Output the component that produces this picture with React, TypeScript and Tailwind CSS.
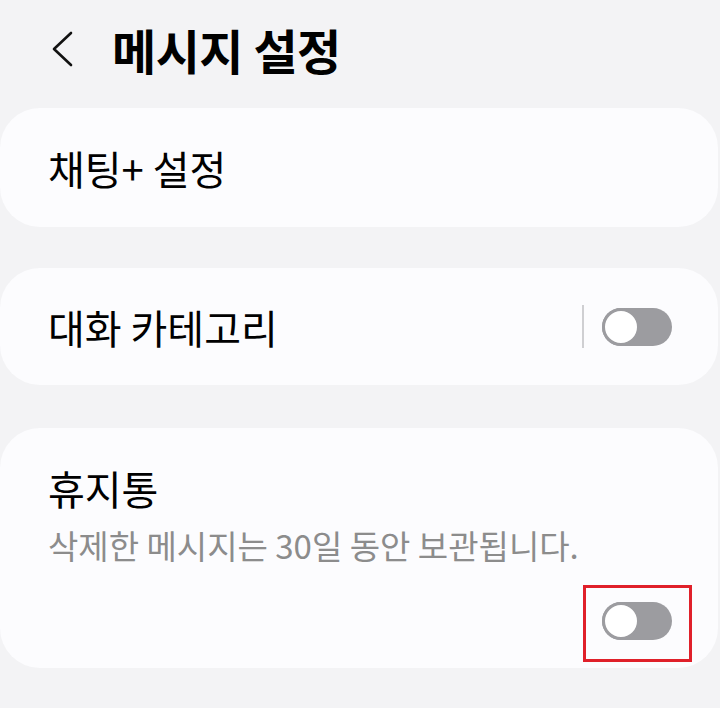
import React from 'react';

const font = { fontFamily: '"Noto Sans CJK KR", "Noto Sans", sans-serif' };

function Toggle() {
  return (
    <div className="relative h-[38px] w-[70px] rounded-full bg-[#9c9ca0]">
      <div className="absolute left-0 top-0 h-[38px] w-[38px] rounded-full border-[3px] border-[#9c9ca0] bg-white" />
    </div>
  );
}

export default function App() {
  return (
    <div className="h-[708px] w-[720px] overflow-hidden bg-[#f3f3f5] text-black" style={font}>
      <div className="flex h-[98px] items-center">
        <svg className="ml-[50px]" width="24" height="40" viewBox="0 0 24 40" fill="none">
          <path d="M21 4 L4 20 L21 36" stroke="#111" strokeWidth="2.6" strokeLinecap="round" strokeLinejoin="round" />
        </svg>
        <h1 className="ml-[38px] text-[48px] font-bold leading-none tracking-[-0.5px]">메시지 설정</h1>
      </div>

      <div className="flex flex-col gap-[41px] pt-[10px]">
        <div className="flex h-[119px] w-[718px] items-center rounded-[40px] bg-[#fcfcfe] pl-[48px]">
          <span className="text-[40px] leading-none">채팅+ 설정</span>
        </div>

        <div className="flex h-[117px] w-[718px] items-center rounded-[40px] bg-[#fcfcfe] pl-[48px] pr-[46px]">
          <span className="flex-1 text-[40px] leading-none">대화 카테고리</span>
          <div className="mr-[18px] h-[43px] w-[2px] bg-[#cfcfd2]" />
          <Toggle />
        </div>

        <div className="mt-[2px] flex w-[718px] flex-col rounded-[40px] bg-[#fcfcfe] pb-[28px] pl-[48px] pr-[46px] pt-[40px]">
          <span className="text-[40px] leading-[40px]">휴지통</span>
          <span className="mt-[19px] text-[33px] leading-[36px] text-[#8c8c8c]">삭제한 메시지는 30일 동안 보관됩니다.</span>
          <div className="mt-[39px] flex justify-end">
            <div className="relative">
              <Toggle />
              <div className="absolute -left-[19px] -top-[17px] h-[77px] w-[109px] border-[3px] border-[#e0202a]" />
            </div>
          </div>
        </div>
      </div>
    </div>
  );
}
